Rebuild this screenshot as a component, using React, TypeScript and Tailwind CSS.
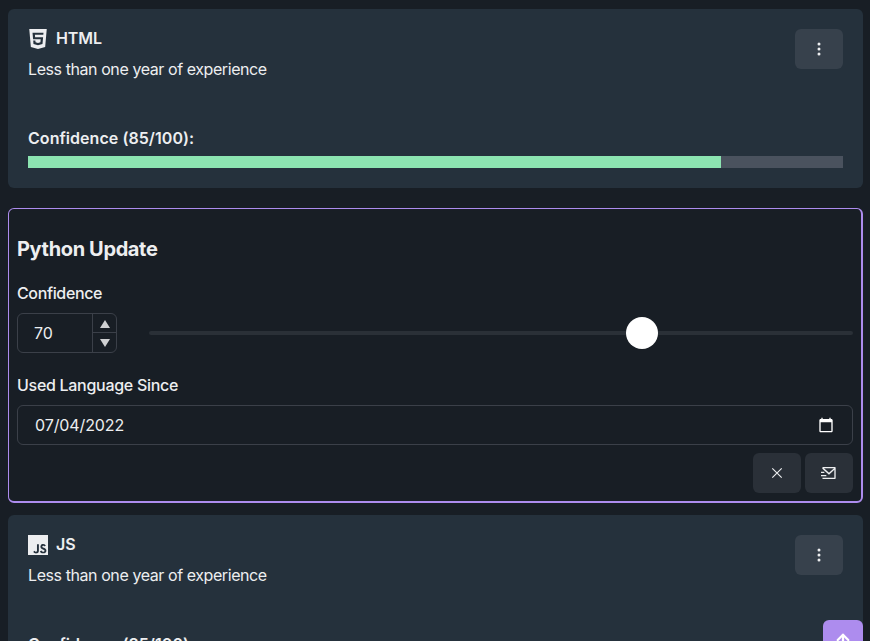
import React from 'react';
import { BsThreeDotsVertical } from 'react-icons/bs';
import { SiHtml5, SiJavascript } from 'react-icons/si';
import { RiMailSendLine } from 'react-icons/ri';
import { FiArrowUp } from 'react-icons/fi';

function LanguageCard({ icon, name, confidence }: { icon: React.ReactNode; name: string; confidence: number }) {
  return (
    <section className="h-[179px] shrink-0 rounded-md bg-[#25313c] px-5 pt-5">
      <div className="flex h-[97px] items-start justify-between">
        <div>
          <h2 className="flex h-5 items-center gap-2 text-base font-semibold">
            {icon}
            <span className="pb-0.5 tracking-[-0.1px]">{name}</span>
          </h2>
          <p className="mt-2 leading-6 tracking-[-0.42px]">Less than one year of experience</p>
        </div>
        <button aria-label="Options" className="flex h-10 w-12 items-center justify-center rounded-md bg-[#37414c]">
          <BsThreeDotsVertical size={16} />
        </button>
      </div>
      <p className="leading-6 font-semibold tracking-[0.05px]">Confidence ({confidence}/100):</p>
      <div className="mt-1.5 h-3 bg-[#4a525e]">
        <div className="h-full bg-[#8ce4b1]" style={{ width: `${confidence}%` }} />
      </div>
    </section>
  );
}

function UpdateForm() {
  return (
    <form className="mt-5 flex h-[295px] shrink-0 flex-col rounded-md border border-r-2 border-b-2 border-[#ad8cee] px-2">
      <h2 className="mt-7 text-xl leading-6 font-bold tracking-[-0.36px]">Python Update</h2>
      <label className="mt-5 leading-6 font-medium tracking-[-0.36px]">Confidence</label>
      <div className="mt-2 flex h-10 items-center gap-8">
        <div className="flex h-10 w-[100px] rounded-md border border-[#3b4049]">
          <div className="flex flex-1 items-center pl-4">70</div>
          <div className="flex w-6 flex-col border-l border-[#3b4049] text-[#cfd0d2]">
            <button type="button" aria-label="Increase" className="flex h-[19px] items-center justify-center border-b border-[#3b4049]">
              <svg width="10" height="8" viewBox="0 0 10 8" className="mt-px"><path d="M5 0 10 8H0Z" fill="currentColor" /></svg>
            </button>
            <button type="button" aria-label="Decrease" className="flex h-[19px] items-center justify-center">
              <svg width="10" height="8" viewBox="0 0 10 8" className="mt-px"><path d="M0 0H10L5 8Z" fill="currentColor" /></svg>
            </button>
          </div>
        </div>
        <div className="relative h-1 flex-1 rounded-xs bg-[#2a3037]">
          <div className="absolute top-[-14px] left-[477px] size-8 rounded-full bg-white" />
        </div>
      </div>
      <label className="mt-5 leading-6 font-medium tracking-[-0.29px]">Used Language Since</label>
      <div className="mt-2 flex h-10 items-center justify-between rounded-md border border-[#3b4049] pr-[18px] pl-[17px]">
        <span className="tracking-[-0.1px]">07/04/2022</span>
        <svg width="16" height="16" viewBox="0 0 24 24" fill="white">
          <path d="M20 3h-1V1h-2v2H7V1H5v2H4c-1.1 0-2 .9-2 2v16c0 1.1.9 2 2 2h16c1.1 0 2-.9 2-2V5c0-1.1-.9-2-2-2zm0 18H4V8h16v13z" />
        </svg>
      </div>
      <div className="mt-2 flex justify-end gap-1">
        <button type="button" aria-label="Cancel" className="flex h-10 w-12 items-center justify-center rounded-md bg-[#2a3038]">
          <svg width="16" height="16" viewBox="0 0 16 16" fill="none" stroke="currentColor" strokeWidth="1.15">
            <path d="M3.3 3.3 12.7 12.7M12.7 3.3 3.3 12.7" />
          </svg>
        </button>
        <button type="button" aria-label="Submit" className="flex h-10 w-12 items-center justify-center rounded-md bg-[#2a3038]"><RiMailSendLine size={16} /></button>
      </div>
    </form>
  );
}

export default function App() {
  return (
    <main className="relative flex h-[641px] w-[870px] flex-col overflow-hidden bg-[#181e25] pt-[9px] pr-[7px] pl-2 font-['Inter',sans-serif] text-base text-[#edeef0]">
      <LanguageCard icon={<SiHtml5 size={20} />} name="HTML" confidence={85} />
      <UpdateForm />
      <div className="mt-3 shrink-0">
        <LanguageCard icon={<SiJavascript size={20} />} name="JS" confidence={85} />
      </div>
      <button aria-label="Back to top" className="absolute top-[620px] right-[7px] flex size-10 items-center justify-center rounded-md bg-[#ad8cee] text-white">
        <FiArrowUp size={18} strokeWidth={3} />
      </button>
    </main>
  );
}
